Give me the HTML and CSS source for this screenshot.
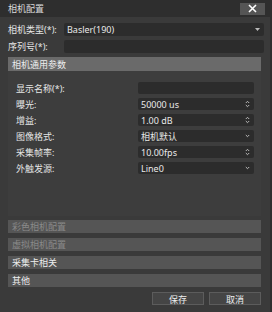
FILE: index.html
```html
<!DOCTYPE html>
<html lang="zh">
<head>
    <meta charset="UTF-8">
    <meta name="viewport" content="width=device-width, initial-scale=1.0">
    <title>相机配置</title>
    <link rel="stylesheet" href="styles.css">
</head>
<body>
    <div class="dialog">
        <div class="titlebar">
            <span class="title">相机配置</span>
            <button class="close-btn">
                <svg width="9" height="9" viewBox="0 0 9 9"><path d="M1 1L8 8M8 1L1 8" stroke="#fff" stroke-width="1.6"/></svg>
            </button>
        </div>

        <div class="top-form">
            <div class="top-row">
                <label>相机类型(*):</label>
                <div class="field combo">Basler(190)<svg class="icon" width="5" height="3" viewBox="0 0 5 3"><path d="M0 0H5L2.5 3Z" fill="#bbb"/></svg></div>
            </div>
            <div class="top-row">
                <label>序列号(*):</label>
                <div class="field"></div>
            </div>
        </div>

        <div class="section open">
            <div class="section-head">相机通用参数</div>
            <div class="section-body">
                <div class="param-row">
                    <label>显示名称(*):</label>
                    <div class="field"></div>
                </div>
                <div class="param-row">
                    <label>曝光:</label>
                    <div class="field spin">50000 us<svg class="icon" width="5" height="8" viewBox="0 0 5 8"><path d="M0.8 3L2.5 1.3L4.2 3M0.8 5L2.5 6.7L4.2 5" stroke="#bbb" fill="none"/></svg></div>
                </div>
                <div class="param-row">
                    <label>增益:</label>
                    <div class="field spin">1.00 dB<svg class="icon" width="5" height="8" viewBox="0 0 5 8"><path d="M0.8 3L2.5 1.3L4.2 3M0.8 5L2.5 6.7L4.2 5" stroke="#bbb" fill="none"/></svg></div>
                </div>
                <div class="param-row">
                    <label>图像格式:</label>
                    <div class="field combo">相机默认<svg class="icon" width="5" height="4" viewBox="0 0 5 4"><path d="M0.8 1L2.5 2.7L4.2 1" stroke="#bbb" fill="none"/></svg></div>
                </div>
                <div class="param-row">
                    <label>采集帧率:</label>
                    <div class="field spin">10.00fps<svg class="icon" width="5" height="8" viewBox="0 0 5 8"><path d="M0.8 3L2.5 1.3L4.2 3M0.8 5L2.5 6.7L4.2 5" stroke="#bbb" fill="none"/></svg></div>
                </div>
                <div class="param-row">
                    <label>外触发源:</label>
                    <div class="field combo">Line0<svg class="icon" width="5" height="4" viewBox="0 0 5 4"><path d="M0.8 1L2.5 2.7L4.2 1" stroke="#bbb" fill="none"/></svg></div>
                </div>
            </div>
        </div>

        <div class="collapsed-list">
            <div class="section-bar disabled">彩色相机配置</div>
            <div class="section-bar disabled">虚拟相机配置</div>
            <div class="section-bar">采集卡相关</div>
            <div class="section-bar">其他</div>
        </div>

        <div class="buttons">
            <button class="btn">保存</button>
            <button class="btn">取消</button>
        </div>
    </div>
</body>
</html>
```

FILE: styles.css
```css
* {
    box-sizing: border-box;
}
body {
    margin: 0;
    background-color: #3a3a3a;
    font-family: "Noto Sans", "Noto Sans CJK SC", sans-serif;
    font-size: 9px;
    color: #e6e6e6;
}
.dialog {
    width: 272px;
    height: 312px;
    background-color: #3a3a3a;
    display: flex;
    flex-direction: column;
    border-right: 2px solid #2f2f2f;
}
.titlebar {
    height: 17px;
    background-color: #2e2e2e;
    display: flex;
    align-items: center;
    justify-content: space-between;
    padding: 0 5px 0 8px;
}
.title {
    color: #dcdcdc;
}
.close-btn {
    width: 25px;
    height: 12px;
    background-color: #555;
    border: none;
    padding: 0;
    display: flex;
    align-items: center;
    justify-content: center;
}
.top-form {
    display: flex;
    flex-direction: column;
    gap: 4px;
    padding: 6px 6px 0 8px;
}
.top-row {
    display: flex;
    align-items: center;
    height: 13px;
}
.top-row label {
    width: 56px;
    flex-shrink: 0;
}
.field {
    flex: 1;
    height: 100%;
    background-color: #2c2c2c;
    border-radius: 2px;
    display: flex;
    align-items: center;
    justify-content: space-between;
    padding: 0 4px 0 3px;
    color: #e8e8e8;
}
.icon {
    flex-shrink: 0;
}
.section {
    margin: 4px 9px 0 8px;
}
.section-head {
    height: 14px;
    background-color: #6a6a6a;
    padding-left: 4px;
    display: flex;
    align-items: center;
    color: #eee;
}
.section-body {
    height: 145px;
    background-color: #3d3d3d;
    display: flex;
    flex-direction: column;
    gap: 4px;
    padding: 11px 7px 0 8px;
}
.param-row {
    display: flex;
    align-items: center;
    height: 12px;
}
.param-row label {
    width: 122px;
    flex-shrink: 0;
}
.collapsed-list {
    display: flex;
    flex-direction: column;
    gap: 5px;
    margin: 4px 9px 0 8px;
}
.section-bar {
    height: 13px;
    background-color: #555;
    padding-left: 4px;
    display: flex;
    align-items: center;
    color: #eee;
}
.section-bar.disabled {
    color: #8a8a8a;
}
.buttons {
    display: flex;
    justify-content: flex-end;
    gap: 5px;
    margin: 5px 9px 0 0;
}
.btn {
    width: 52px;
    height: 13px;
    background-color: #454545;
    border: 1px solid #5c5c5c;
    color: #eee;
    font-family: inherit;
    font-size: 9px;
    padding: 0;
}
```
